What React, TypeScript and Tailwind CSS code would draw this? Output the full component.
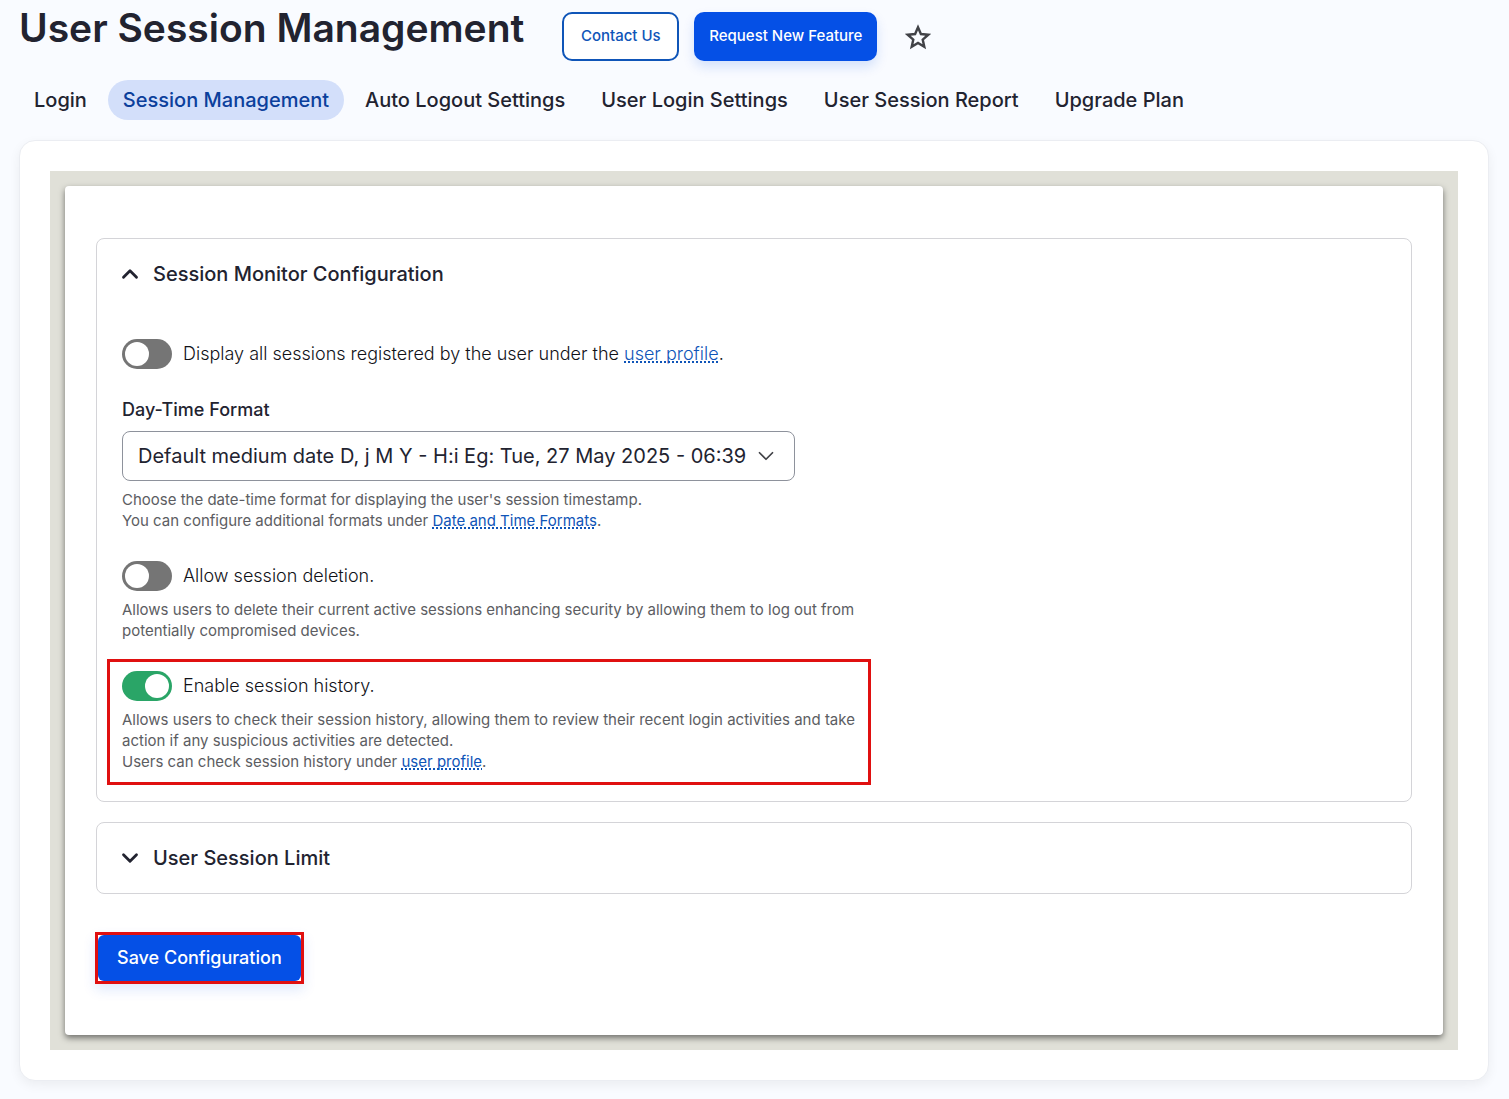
import { useState } from "react";
import type { ReactNode } from "react";
import { ChevronDown, ChevronUp } from "lucide-react";

const tabs = [
  "Login",
  "Session Management",
  "Auto Logout Settings",
  "User Login Settings",
  "User Session Report",
  "Upgrade Plan",
];

function TextLink({ children }: { children: ReactNode }) {
  return (
    <a
      href="#"
      className="text-[#0f55b8] underline decoration-dotted decoration-2 underline-offset-1 [text-decoration-skip-ink:none]"
    >
      {children}
    </a>
  );
}

type ToggleProps = {
  id: string;
  defaultChecked?: boolean;
  children: ReactNode;
};

function Toggle({ id, defaultChecked, children }: ToggleProps) {
  return (
    <div className="flex items-center gap-[11px]">
      <input
        id={id}
        type="checkbox"
        role="switch"
        defaultChecked={defaultChecked}
        className="h-[30px] w-[50px] shrink-0 cursor-pointer appearance-none rounded-full bg-[#757575] p-[3px] before:block before:size-6 before:rounded-full before:bg-white checked:bg-[#2aa567] checked:before:ml-5"
      />
      <label htmlFor={id} className="text-lg leading-[30px] font-light text-[#111218]">
        {children}
      </label>
    </div>
  );
}

function Description({ children }: { children: ReactNode }) {
  return (
    <p className="mt-2 text-[15px] leading-[21px] text-[#5c5d62]">{children}</p>
  );
}

type PanelProps = {
  title: string;
  defaultOpen?: boolean;
  children?: ReactNode;
};

function Panel({ title, defaultOpen = false, children }: PanelProps) {
  const [open, setOpen] = useState(defaultOpen);
  const Icon = open ? ChevronUp : ChevronDown;

  return (
    <section className="rounded-lg border border-[#d4d4d8]">
      <button
        type="button"
        aria-expanded={open}
        onClick={() => setOpen(!open)}
        className="flex h-[70px] w-full items-center gap-[10px] px-5 text-left text-xl font-medium"
      >
        <Icon size={26} strokeWidth={2.6} />
        {title}
      </button>
      {open && children}
    </section>
  );
}

export default function App() {
  return (
    <div className="min-h-screen bg-[#f9fbff] pr-5 pb-[18px] pl-[19px] font-['Inter',sans-serif] text-[#222330]">
      <header className="flex items-start">
        <h1 className="text-[39px] leading-[56px] font-semibold whitespace-nowrap">
          User Session Management
        </h1>
        <div className="flex flex-1 items-center pt-3 pl-[38px]">
          <a
            href="#"
            className="flex h-[49px] w-[117px] items-center justify-center rounded-[10px] border-2 border-[#0f55b8] bg-white text-[15px] font-medium text-[#0f55b8]"
          >
            Contact Us
          </a>
          <a
            href="#"
            className="ml-[15px] flex h-[49px] w-[183px] items-center justify-center rounded-[10px] bg-[#0550e6] text-[15px] font-medium text-white shadow-[0_6px_12px_rgba(5,80,230,0.15)]"
          >
            Request New Feature
          </a>
          <button type="button" aria-label="Add to shortcuts" className="ml-7">
            <svg viewBox="0 0 26 26" className="size-[26px]" fill="none" stroke="#414247" strokeWidth="2.4">
              <path d="M13 3.2l2.9 6.8 7.4.7-5.6 4.9 1.6 7.2-6.3-3.8-6.300 3.800 1.600-7.200-5.600-4.900 7.400-.7z" />
            </svg>
          </button>
        </div>
      </header>

      <nav className="mt-[19px] flex gap-[6px] text-xl font-medium">
        {tabs.map((tab) => (
          <a
            key={tab}
            href="#"
            aria-current={tab === "Session Management" ? "page" : undefined}
            className="rounded-full px-[15px] leading-10 whitespace-nowrap aria-[current=page]:bg-[#d3dffa] aria-[current=page]:text-[#0b409c]"
          >
            {tab}
          </a>
        ))}
      </nav>

      <main className="mt-5 rounded-2xl border border-[#ebedf2] bg-white p-[30px] shadow-[0_4px_12px_rgba(0,0,0,0.06)]">
        <div className="bg-[#e0e0d8] p-[15px]">
          <form
            onSubmit={(e) => e.preventDefault()}
            className="rounded-[4px] bg-white px-[31px] pt-[52px] pb-[51px] shadow-[0_3px_6px_rgba(0,0,0,0.5)]"
          >
            <Panel title="Session Monitor Configuration" defaultOpen>
              <div className="px-[25px] pt-[30px] pb-4">
                <Toggle id="display-sessions">
                  Display all sessions registered by the user under the{" "}
                  <TextLink>user profile</TextLink>.
                </Toggle>

                <label
                  htmlFor="date-format"
                  className="mt-[26px] block text-lg leading-[30px] font-medium"
                >
                  Day-Time Format
                </label>
                <div className="relative mt-[6px] w-[673px] max-w-full">
                  <select
                    id="date-format"
                    className="h-[50px] w-full appearance-none rounded-lg border border-[#8e929c] bg-white pr-10 pl-[15px] text-xl"
                  >
                    <option>
                      Default medium date D, j M Y - H:i Eg: Tue, 27 May 2025 - 06:39
                    </option>
                  </select>
                  <ChevronDown
                    size={26}
                    strokeWidth={1.6}
                    className="pointer-events-none absolute top-3 right-4 text-[#414247]"
                  />
                </div>
                <Description>
                  Choose the date-time format for displaying the user's session
                  timestamp.
                  <br />
                  You can configure additional formats under{" "}
                  <TextLink>Date and Time Formats</TextLink>.
                </Description>

                <div className="mt-[30px] max-w-[744px]">
                  <Toggle id="session-deletion">Allow session deletion.</Toggle>
                  <Description>
                    Allows users to delete their current active sessions
                    enhancing security by allowing them to log out from
                    potentially compromised devices.
                  </Description>
                </div>

                <div className="-ml-[15px] mt-[18px] max-w-[764px] border-3 border-[#e01010] px-3 pt-[9px] pb-[10px]">
                  <Toggle id="session-history" defaultChecked>
                    Enable session history.
                  </Toggle>
                  <Description>
                    Allows users to check their session history, allowing them
                    to review their recent login activities and take action if
                    any suspicious activities are detected.
                    <br />
                    Users can check session history under{" "}
                    <TextLink>user profile</TextLink>.
                  </Description>
                </div>
              </div>
            </Panel>

            <div className="mt-5">
              <Panel title="User Session Limit" />
            </div>

            <div className="-ml-px mt-[38px] w-fit border-3 border-[#e01010] shadow-[0_6px_12px_rgba(5,80,230,0.12)]">
              <button
                type="submit"
                className="h-[46px] rounded-md bg-[#0550e6] px-[19px] text-lg font-medium text-white"
              >
                Save Configuration
              </button>
            </div>
          </form>
        </div>
      </main>
    </div>
  );
}
